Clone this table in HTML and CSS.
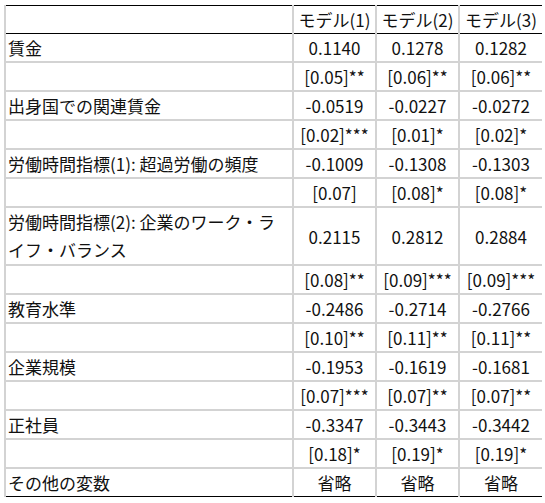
FILE: index.html
```html
<!DOCTYPE html>
<html lang="ja">
<head>
<meta charset="utf-8">
<title>推定結果</title>
<link rel="stylesheet" href="styles.css">
</head>
<body>
<table class="results">
  <colgroup>
    <col class="c-label">
    <col class="c-model">
    <col class="c-model">
    <col class="c-model">
  </colgroup>
  <thead>
    <tr>
      <th class="label"></th>
      <th>モデル(1)</th>
      <th>モデル(2)</th>
      <th>モデル(3)</th>
    </tr>
  </thead>
  <tbody>
    <tr><td class="label">賃金</td><td>0.1140</td><td>0.1278</td><td>0.1282</td></tr>
    <tr><td class="label"></td><td>[0.05]**</td><td>[0.06]**</td><td>[0.06]**</td></tr>
    <tr><td class="label">出身国での関連賃金</td><td>-0.0519</td><td>-0.0227</td><td>-0.0272</td></tr>
    <tr><td class="label"></td><td>[0.02]***</td><td>[0.01]*</td><td>[0.02]*</td></tr>
    <tr><td class="label">労働時間指標(1): 超過労働の頻度</td><td>-0.1009</td><td>-0.1308</td><td>-0.1303</td></tr>
    <tr><td class="label"></td><td>[0.07]</td><td>[0.08]*</td><td>[0.08]*</td></tr>
    <tr class="double"><td class="label">労働時間指標(2): 企業のワーク・ラ<br>イフ・バランス</td><td>0.2115</td><td>0.2812</td><td>0.2884</td></tr>
    <tr><td class="label"></td><td>[0.08]**</td><td>[0.09]***</td><td>[0.09]***</td></tr>
    <tr><td class="label">教育水準</td><td>-0.2486</td><td>-0.2714</td><td>-0.2766</td></tr>
    <tr><td class="label"></td><td>[0.10]**</td><td>[0.11]**</td><td>[0.11]**</td></tr>
    <tr><td class="label">企業規模</td><td>-0.1953</td><td>-0.1619</td><td>-0.1681</td></tr>
    <tr><td class="label"></td><td>[0.07]***</td><td>[0.07]**</td><td>[0.07]**</td></tr>
    <tr><td class="label">正社員</td><td>-0.3347</td><td>-0.3443</td><td>-0.3442</td></tr>
    <tr><td class="label"></td><td>[0.18]*</td><td>[0.19]*</td><td>[0.19]*</td></tr>
    <tr class="last"><td class="label">その他の変数</td><td>省略</td><td>省略</td><td>省略</td></tr>
  </tbody>
</table>
</body>
</html>
```

FILE: styles.css
```css
html, body {
  margin: 0;
  padding: 0;
  background: #ffffff;
}

body {
  padding: 5px 0 0 4px;
  font-family: "Noto Sans CJK JP", "Noto Sans", sans-serif;
  font-size: 17px;
  color: #111111;
}

.results {
  border-collapse: collapse;
  table-layout: fixed;
  width: 536px;
}

.c-label { width: 288px; }
.c-model { width: 83px; }

.results th,
.results td {
  padding: 0 1px;
  line-height: 27px;
  text-align: center;
  font-weight: normal;
  white-space: nowrap;
  border-left: 2px solid #d3d3d3;
  border-bottom: 2px solid #d3d3d3;
}

.results .label {
  text-align: left;
  padding-left: 2px;
  white-space: normal;
}

.results tr.double .label {
  line-height: 28px;
}

.results thead th {
  border-top: 1px solid #000;
  border-bottom: 1px solid #000;
}

.results tr.last td {
  border-bottom: 1px solid #000;
}
```
